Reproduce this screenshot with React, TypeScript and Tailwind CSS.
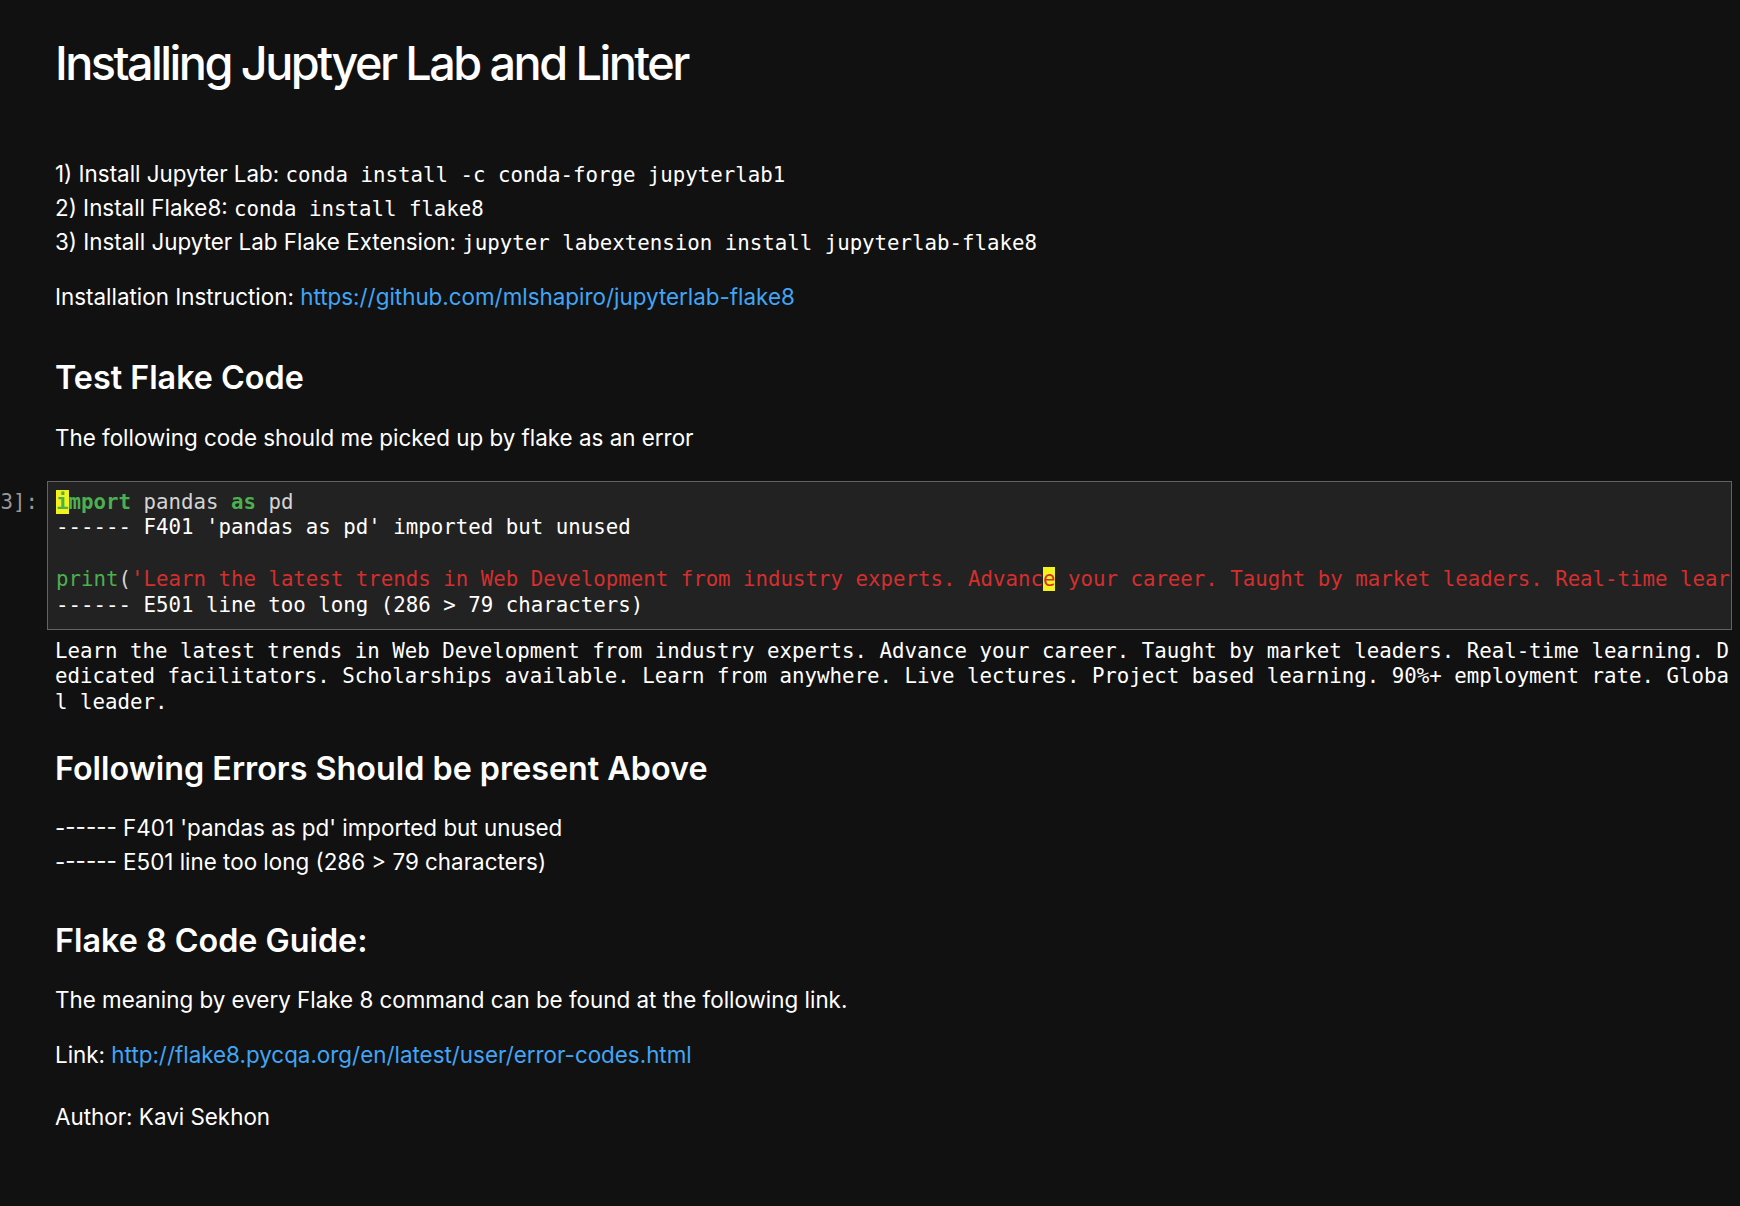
import React from "react";

const mono = "font-['DejaVu_Sans_Mono','Liberation_Mono',monospace]";

function Code({ children }: { children: React.ReactNode }) {
  return <code className={`${mono} text-[20.75px] leading-[1]`}>{children}</code>;
}

const body = "ml-[55px] text-[22.4px] leading-[34px]";
const h3 = "ml-[55px] text-[32.3px] leading-[38.8px] font-semibold";

export default function App() {
  return (
    <div className="min-h-[1206px] w-full bg-[#111111] text-white font-['Inter',sans-serif] pt-[35px] pr-[8px]">
      {/* Title */}
      <h1 className="ml-[55px] text-[46.8px] leading-[56px] font-medium tracking-[-2.55px]">
        Installing Juptyer Lab and Linter
      </h1>

      <div className={`${body} mt-[66px]`}>
        <div>
          1) Install Jupyter Lab: <Code>conda install -c conda-forge jupyterlab1</Code>
        </div>
        <div>
          2) Install Flake8: <Code>conda install flake8</Code>
        </div>
        <div>
          3) Install Jupyter Lab Flake Extension:{" "}
          <Code>jupyter labextension install jupyterlab-flake8</Code>
        </div>
      </div>

      <p className={`${body} mt-[21px]`}>
        Installation Instruction:{" "}
        <a className="text-[#42a5f5]">https://github.com/mlshapiro/jupyterlab-flake8</a>
      </p>

      <h3 className={`${h3} mt-[44.6px]`}>Test Flake Code</h3>

      <p className={`${body} mt-[23.5px]`}>
        The following code should me picked up by flake as an error
      </p>

      {/* Code cell */}
      <div className="mt-[25.7px] flex">
        <div
          className={`w-[47px] shrink-0 overflow-hidden flex justify-end pr-[9px] pt-[9px] ${mono} text-[20.75px] leading-[25.8px] text-[#999999] whitespace-pre`}
        >
          [3]:
        </div>
        <div className="flex-1 min-w-0 overflow-hidden border border-[#636363] bg-[#222222] pl-[8px] pt-[8px] pb-[10px]">
          <div className={`${mono} text-[20.75px] leading-[25.8px] whitespace-pre`}>
            <div>
              <span className="font-bold text-[#4caf50]">
                <span className="bg-[#f2f21e]">i</span>mport
              </span>
              <span className="text-[#d4d4d4]"> pandas </span>
              <span className="font-bold text-[#4caf50]">as</span>
              <span className="text-[#d4d4d4]"> pd</span>
            </div>
            <div className="text-white">------ F401 'pandas as pd' imported but unused</div>
            <div>&nbsp;</div>
            <div>
              <span className="text-[#4caf50]">print</span>
              <span className="text-[#d4d4d4]">(</span>
              <span className="text-[#d32f2f]">
                'Learn the latest trends in Web Development from industry experts. Advanc
                <span className="bg-[#f2f21e]">e</span> your career. Taught by market leaders.
                Real-time learning. Dedicated facilitators. Scholarships available. Learn from
                anywhere. Live lectures. Project based learning. 90%+ employment rate. Global
                leader.'
              </span>
              <span className="text-[#d4d4d4]">)</span>
            </div>
            <div className="text-white">------ E501 line too long (286 &gt; 79 characters)</div>
          </div>
        </div>
      </div>

      {/* Output */}
      <div className={`ml-[55px] mt-[9px] ${mono} text-[20.75px] leading-[25.8px] whitespace-pre text-white`}>
        <div>
          Learn the latest trends in Web Development from industry experts. Advance your career. Taught by market leaders. Real-time learning. D
        </div>
        <div>
          edicated facilitators. Scholarships available. Learn from anywhere. Live lectures. Project based learning. 90%+ employment rate. Globa
        </div>
        <div>l leader.</div>
      </div>

      <h3 className={`${h3} mt-[34px]`}>Following Errors Should be present Above</h3>

      <div className={`${body} mt-[22.4px]`}>
        <div>------ F401 'pandas as pd' imported but unused</div>
        <div>------ E501 line too long (286 &gt; 79 characters)</div>
      </div>

      <h3 className={`${h3} mt-[42.4px]`}>Flake 8 Code Guide:</h3>

      <p className={`${body} mt-[22.4px]`}>
        The meaning by every Flake 8 command can be found at the following link.
      </p>

      <p className={`${body} mt-[21.5px]`}>
        Link: <a className="text-[#42a5f5]">http://flake8.pycqa.org/en/latest/user/error-codes.html</a>
      </p>

      <p className={`${body} mt-[28px]`}>Author: Kavi Sekhon</p>
    </div>
  );
}
